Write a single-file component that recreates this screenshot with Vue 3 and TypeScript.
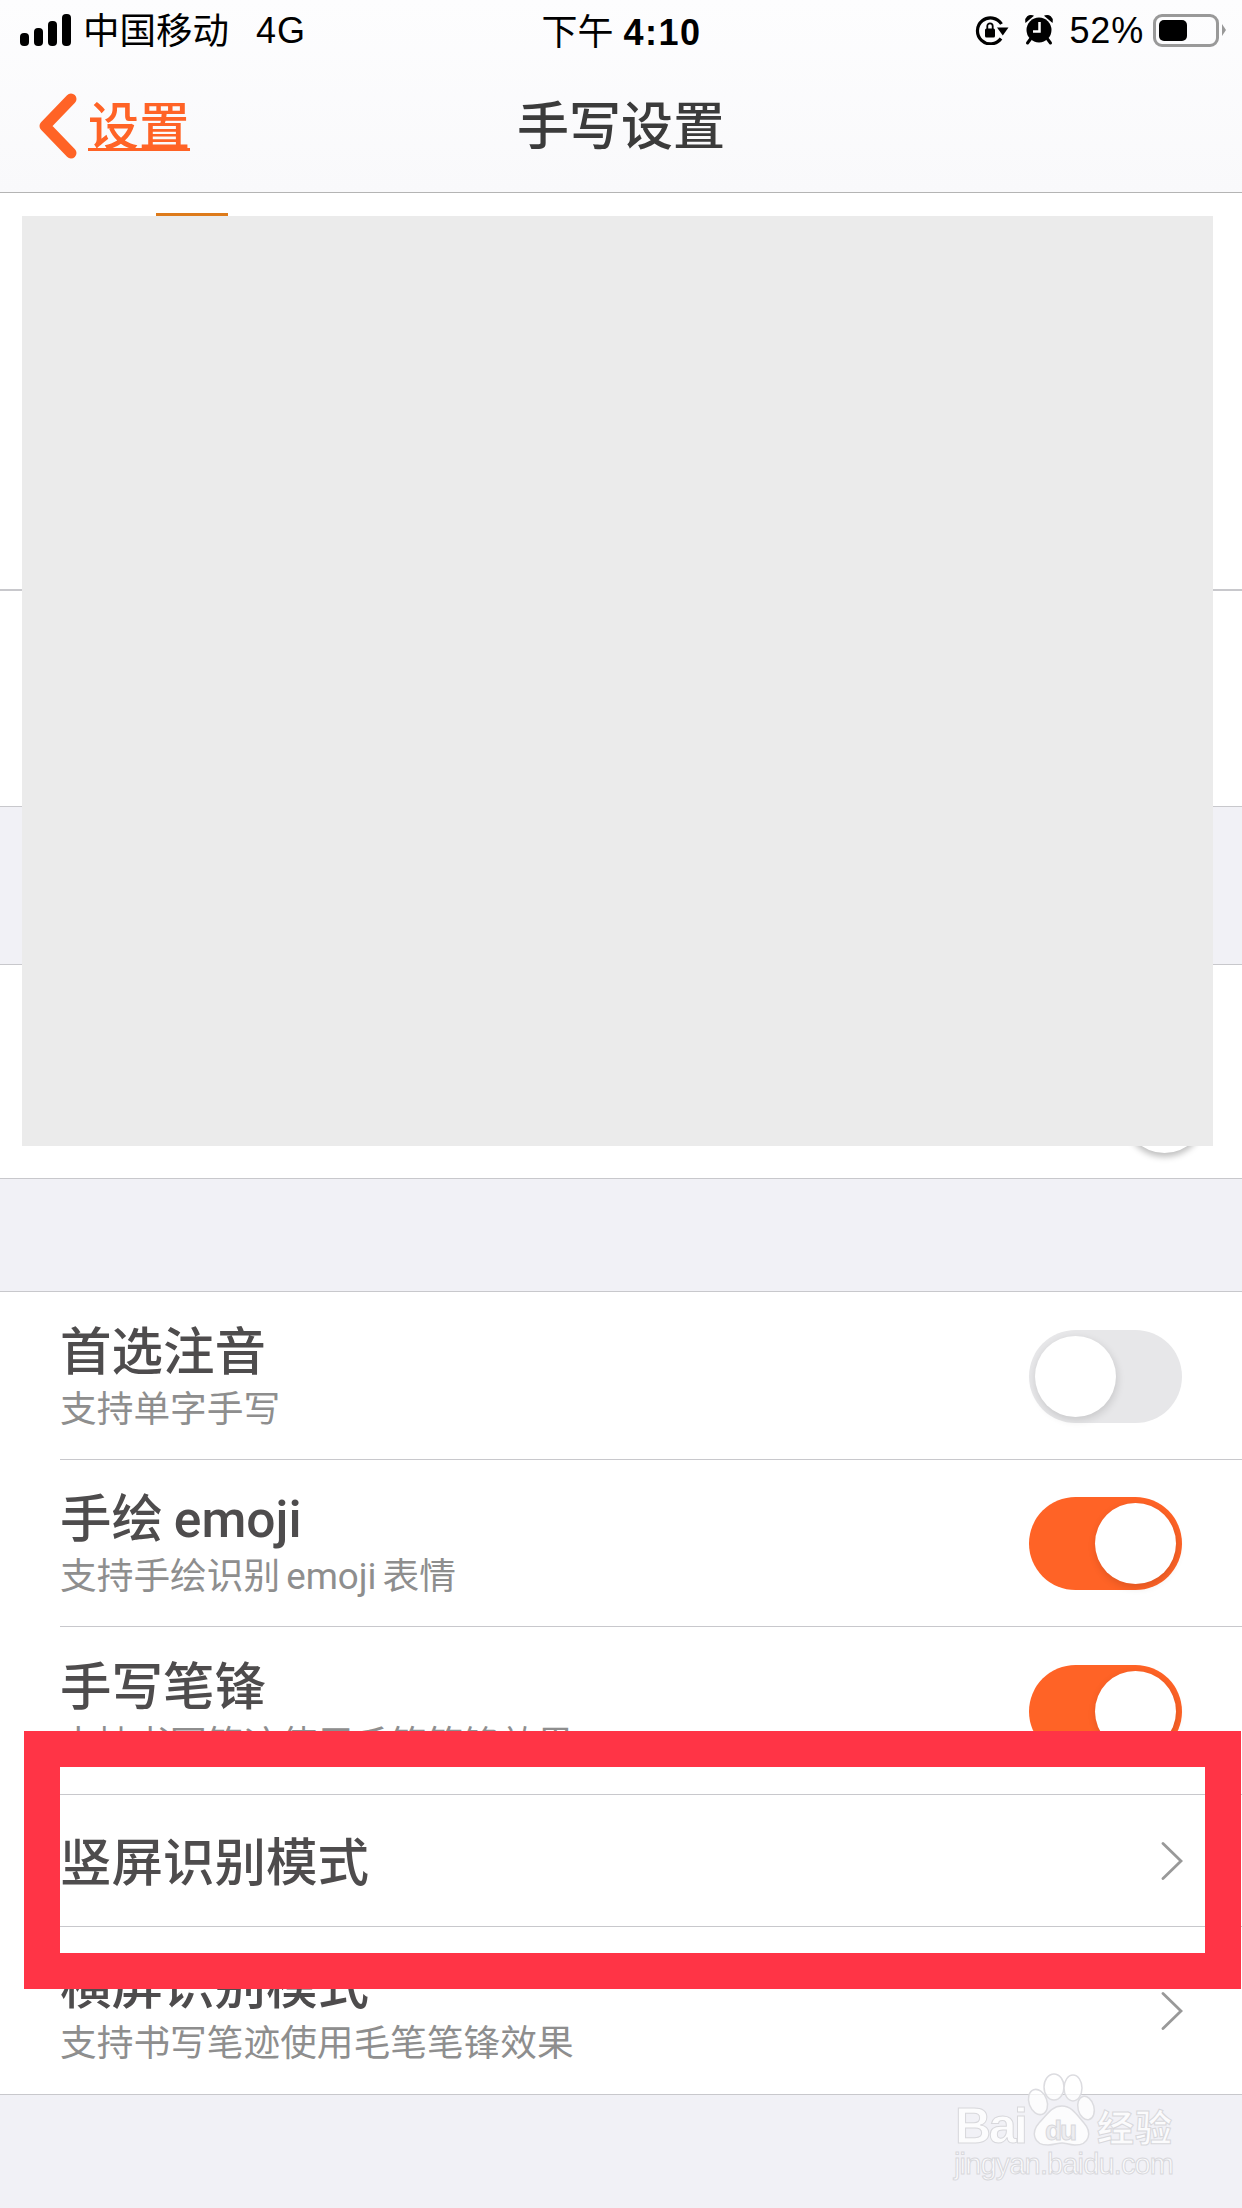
<template>
  <div class="page">
    <header class="top">
      <div class="status">
        <div class="status__left">
          <svg class="signal" width="52" height="32" viewBox="0 0 52 32">
            <rect x="0" y="19" width="9" height="13" rx="4" />
            <rect x="14" y="14" width="9" height="18" rx="4" />
            <rect x="28" y="7" width="9" height="25" rx="4" />
            <rect x="42" y="0" width="9" height="32" rx="4" />
          </svg>
          <span class="carrier">中国移动</span>
          <span class="net">4G</span>
        </div>
        <div class="status__time">下午 <b>4:10</b></div>
        <div class="status__right">
          <svg width="34" height="30" viewBox="0 0 34 30">
            <path d="M26.5 9A13 13 0 1 0 26 23.500" fill="none" stroke="#000" stroke-width="3.200" />
            <path d="M22 12.500h11.500l-5.700 8z" fill="#000" />
            <rect x="10" y="13.500" width="10" height="9" rx="1.500" fill="#000" />
            <path d="M12.300 14v-3a2.700 2.700 0 0 1 5.400 0v3" fill="none" stroke="#000" stroke-width="1.800" />
          </svg>
          <svg class="alarm" width="30" height="32" viewBox="0 0 30 32">
            <circle cx="15" cy="16" r="12.500" fill="#000" />
            <path d="M2 7.500a5 5 0 0 1 6.500-5.500zM28 7.500a5 5 0 0 0-6.500-5.500z" fill="#000" stroke="#000" stroke-width="1.500" />
            <path d="M6.500 25l-3 4M23.500 25l3 4" stroke="#000" stroke-width="3" stroke-linecap="round" />
            <path d="M15.500 8v9.500H9" fill="none" stroke="#fff" stroke-width="2.500" />
          </svg>
          <span class="percent">52%</span>
          <div class="battery"><div class="battery__fill" :style="{ width: `${batteryFill}px` }"></div></div>
          <div class="battery__nub"></div>
        </div>
      </div>
      <nav class="nav">
        <div class="nav__back">
          <svg width="40" height="66" viewBox="0 0 40 66">
            <path d="M33 6L7 33l26 27" fill="none" stroke="#ff6326" stroke-width="11" stroke-linecap="round" stroke-linejoin="round" />
          </svg>
          <span class="nav__back-label">设置</span>
        </div>
        <h1 class="nav__title">手写设置</h1>
        <div></div>
      </nav>
    </header>

    <section class="group group--first">
      <div class="group__row group__row--tall"></div>
      <div class="group__row group__row--short"></div>
    </section>
    <div class="gap gap--a"></div>
    <section class="group group--slider">
      <div class="thumb"></div>
    </section>
    <div class="gap gap--b"></div>

    <section class="group">
      <div
        v-for="row in rows"
        :key="row.title"
        class="row"
        :class="{ 'row--plain': !row.sub }"
      >
        <div class="row__text">
          <div class="row__title">{{ row.title }}</div>
          <div v-if="row.sub" class="row__sub">{{ row.sub }}</div>
        </div>
        <div v-if="row.kind === 'off' || row.kind === 'on'" class="switch" :class="`switch--${row.kind}`">
          <div class="switch__knob"></div>
        </div>
        <svg v-else class="chevron" width="22" height="38" viewBox="0 0 22 38">
          <path d="M2 1.500L20 19 2 36.500" fill="none" stroke="#999" stroke-width="2.800" stroke-linecap="round" />
        </svg>
      </div>
    </section>

    <!-- things pasted over the screenshot -->
    <div class="cover"></div>
    <div class="tab-mark"></div>
    <div class="frame"></div>
    <svg class="watermark" width="240" height="122" viewBox="0 0 240 122">
      <g fill="#fff" fill-opacity=".75" stroke="#dcdce0" stroke-width="1.500">
        <ellipse cx="88" cy="32" rx="9" ry="13" transform="rotate(-20 88 32)" />
        <ellipse cx="104" cy="17" rx="10" ry="13" />
        <ellipse cx="123" cy="18" rx="9" ry="13" />
        <ellipse cx="136" cy="38" rx="8" ry="12" transform="rotate(-15 136 38)" />
        <path d="M112 36c10 0 15 9 22 17 8 9 6 22-9 22-6 0-9-2-13-2s-8 2-14 2c-15 0-17-13-9-22 8-8 12-17 23-17z" />
      </g>
      <g class="watermark__text">
        <text x="5" y="73" font-size="50" font-weight="700" textLength="73">Bai</text>
        <text x="95" y="70" font-size="28" font-weight="700" textLength="32" class="watermark__du">du</text>
        <text x="147" y="72" font-size="37" font-weight="700" textLength="75">经验</text>
        <text x="4" y="104" font-size="29" textLength="220">jingyan.baidu.com</text>
      </g>
    </svg>
  </div>
</template>

<script setup lang="ts">
type RowKind = "off" | "on" | "link";

interface SettingRow {
  title: string;
  sub?: string;
  kind: RowKind;
}

const batteryFill = 28;

const rows: SettingRow[] = [
  { title: "首选注音", sub: "支持单字手写", kind: "off" },
  { title: "手绘 emoji", sub: "支持手绘识别 emoji 表情", kind: "on" },
  { title: "手写笔锋", sub: "支持书写笔迹使用毛笔笔锋效果", kind: "on" },
  { title: "竖屏识别模式", kind: "link" },
  { title: "横屏识别模式", sub: "支持书写笔迹使用毛笔笔锋效果", kind: "link" },
];
</script>

<style>
html,
body {
  background: #f1f1f6;
}
</style>

<style scoped>
.page {
  position: relative;
  width: 1242px;
  height: 2208px;
  overflow: hidden;
  background: #f1f1f6;
  font-family: "Liberation Sans", "Noto Sans CJK SC", sans-serif;
}

.top {
  height: 192px;
  background: linear-gradient(#fdfdfe, #f9f9fb);
  border-bottom: 1px solid #b4b4b4;
}

.status {
  display: grid;
  grid-template-columns: 1fr auto 1fr;
  align-items: center;
  height: 60px;
  padding: 0 16px 0 20px;
  color: #000;
  font-size: 36px;
}
.status__left,
.status__right {
  display: flex;
  align-items: center;
}
.status__right {
  justify-content: flex-end;
}
.signal {
  fill: #000;
  margin-top: -1px;
}
.carrier {
  margin: 0 0 3px 11px;
  font-size: 36.5px;
}
.net {
  margin: 2px 0 0 27px;
  font-weight: 400;
  letter-spacing: 1px;
}
.status__time {
  margin: 0 3px 2px 0;
}
.status__time b {
  font-weight: 700;
  letter-spacing: 1.5px;
}
.percent {
  margin: 2px 0 0 16px;
  letter-spacing: 0.8px;
}
.alarm {
  margin-left: 15px;
}
.battery {
  box-sizing: border-box;
  width: 66px;
  height: 33px;
  margin-left: 9px;
  padding: 3px;
  border: 3px solid #999;
  border-radius: 9px;
}
.battery__fill {
  height: 100%;
  border-radius: 5px;
  background: #000;
}
.battery__nub {
  width: 0;
  height: 0;
  margin-left: 3px;
  border-top: 6px solid transparent;
  border-bottom: 6px solid transparent;
  border-left: 4px solid #999;
}

.nav {
  display: grid;
  grid-template-columns: 1fr auto 1fr;
  align-items: center;
  height: 132px;
  padding: 0 38px;
}
.nav__back {
  display: flex;
  align-items: center;
  gap: 10px;
}
.nav__back-label {
  color: #ff6326;
  font-size: 51px;
  line-height: 60px;
  border-bottom: 3px solid #ff6326;
  height: 50px;
  margin-bottom: 4px;
  font-weight: 500;
}
.nav__title {
  margin: 2px 0 0;
  color: #3b3b3b;
  font-size: 52px;
  font-weight: 500;
  line-height: 60px;
}

.group {
  background: #fff;
  border-bottom: 1px solid #c8c8cc;
}
.group__row--tall {
  height: 396px;
  border-bottom: 2px solid #c8c8cc;
}
.group__row--short {
  height: 215px;
}
.gap {
  border-bottom: 1px solid #c8c8cc;
}
.gap--a {
  height: 157px;
}
.gap--b {
  height: 112px;
}
.group--slider {
  display: flex;
  justify-content: flex-end;
  align-items: flex-end;
  height: 214px;
  padding: 0 37px 25px 0;
  box-sizing: border-box;
}
.thumb {
  width: 81px;
  height: 81px;
  border-radius: 50%;
  background: #fff;
  box-shadow: 0 4px 6px rgba(0, 0, 0, 0.25);
}

.row {
  position: relative;
  display: flex;
  align-items: center;
  justify-content: space-between;
  box-sizing: border-box;
  height: 168px;
  padding: 0 60px;
  font-family: Roboto, "Noto Sans CJK SC", sans-serif;
}
.row:nth-child(2),
.row:last-child {
  height: 167px;
}
.row::after {
  content: "";
  position: absolute;
  left: 60px;
  right: 0;
  bottom: 0;
  height: 1px;
  background: #c8c8cc;
}
.row:last-child::after {
  display: none;
}
.row--plain {
  height: 132px;
}
.row__text {
  margin-top: 3px;
}
.row--plain .row__text {
  margin-top: 6px;
}
.row__title {
  color: #4e4c4d;
  font-size: 51.5px;
  font-weight: 500;
  line-height: 64px;
  word-spacing: -2px;
}
.row__sub {
  color: #8e8e8e;
  font-size: 36.7px;
  line-height: 50px;
  word-spacing: -3px;
}

.switch {
  box-sizing: border-box;
  display: flex;
  width: 153px;
  height: 93px;
  padding: 6px;
  border-radius: 47px;
}
.switch--off {
  background: #e7e7e9;
}
.switch--on {
  justify-content: flex-end;
  background: #ff6326;
}
.switch__knob {
  width: 81px;
  height: 81px;
  border-radius: 50%;
  background: #fff;
  box-shadow: 1px 3px 8px rgba(0, 0, 0, 0.14);
}
.chevron {
  margin-right: -1px;
}

.cover {
  position: absolute;
  left: 22px;
  top: 216px;
  width: 1191px;
  height: 930px;
  background: #ebebeb;
}
.tab-mark {
  position: absolute;
  left: 156px;
  top: 213px;
  width: 72px;
  height: 3px;
  background: #dd7a1a;
}
.frame {
  position: absolute;
  left: 24px;
  top: 1731px;
  box-sizing: border-box;
  width: 1217px;
  height: 258px;
  border: 36px solid #ff3446;
}
.watermark {
  position: absolute;
  left: 950px;
  top: 2070px;
}
.watermark__text {
  fill: #fff;
  fill-opacity: 0.75;
  stroke: #d8d8dc;
  stroke-width: 1px;
  font-family: "Liberation Sans", "Noto Sans CJK SC", sans-serif;
}
.watermark__du {
  fill: #e8e8ec;
}
</style>
